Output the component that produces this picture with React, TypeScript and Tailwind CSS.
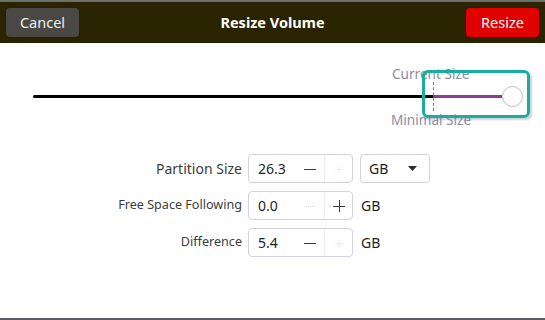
import React from 'react';

const font = { fontFamily: '"Noto Sans", "Open Sans", sans-serif' };

const Minus = ({ faded }: { faded?: boolean }) => (
  <svg width="12" height="12" viewBox="0 0 12 12">
    <line x1="0" y1="6.5" x2="12" y2="6.5" stroke={faded ? '#dcdce8' : '#3a3a3a'} strokeWidth="1" strokeDasharray={faded ? '1 1' : undefined} />
  </svg>
);

const Plus = ({ faded }: { faded?: boolean }) => (
  <svg width="12" height="12" viewBox="0 0 12 12">
    {faded ? (
      <>
        <line x1="2.5" y1="6.5" x2="9.5" y2="6.5" stroke="#dcdce8" strokeWidth="1" strokeDasharray="1 1" />
        <line x1="6" y1="3" x2="6" y2="10" stroke="#dcdce8" strokeWidth="1" strokeDasharray="1 1" />
      </>
    ) : (
      <>
        <line x1="0" y1="6.5" x2="12" y2="6.5" stroke="#3a3a3a" strokeWidth="1" />
        <line x1="6.5" y1="0" x2="6.5" y2="12" stroke="#3a3a3a" strokeWidth="1" />
      </>
    )}
  </svg>
);

interface SpinProps {
  value: string;
  minusOff?: boolean;
  plusOff?: boolean;
}

const SpinBox: React.FC<SpinProps> = ({ value, minusOff, plusOff }) => (
  <div className="flex h-[29px] w-[105px] rounded-[4px] border border-[#d2d2e2] bg-white">
    <div className="flex w-[46px] items-center pl-[9px] text-[14px] text-[#1e1e1e]">{value}</div>
    <div className="flex w-[29px] items-center justify-center">
      <Minus faded={minusOff} />
    </div>
    <div className="flex w-[28px] items-center justify-center border-l border-[#ececf4]">
      <Plus faded={plusOff} />
    </div>
  </div>
);

// 一行表單: 標籤 + 數值框 + 單位
const Row = ({ label, big, children }: { label: string; big?: boolean; children: React.ReactNode }) => (
  <div className="flex h-[29px] items-center">
    <div className={`w-[242px] text-right text-[#3c3c3c] ${big ? 'text-[14px]' : 'text-[12.6px]'}`}>{label}</div>
    <div className="ml-[6px] flex items-center">{children}</div>
  </div>
);

export default function App() {
  return (
    <div className="flex h-[320px] w-[545px] flex-col overflow-hidden bg-white" style={font}>
      {/* 標題列 */}
      <div className="flex h-[43px] items-center justify-between border-t-2 border-[#6e6e6e] bg-[#2a2300] px-[6px]">
        <button className="h-[29px] w-[73px] rounded-[4px] bg-[#4a4844] text-[14.5px] text-[#eeeeee]">Cancel</button>
        <div className="text-[14.5px] font-bold text-white">Resize Volume</div>
        <button className="h-[29px] w-[73px] rounded-[4px] bg-[#e00000] text-[14.5px] text-white">Resize</button>
      </div>

      {/* 滑桿 */}
      <div className="relative h-[111px] pt-[43px]">
        <div className="flex items-center pl-[33px] pr-[22px]">
          <div className="h-[3px] flex-1 rounded-l-full bg-black" />
          <div className="h-[3px] w-[69px] bg-[#8e3c8e]" />
          <div className="h-[21px] w-[21px] rounded-full border border-[#bdbdc8] bg-white" />
        </div>
        <div className="absolute left-[392px] top-[22px] text-[13.6px] leading-[18px] text-[#8c8ca6]">Current Size</div>
        <div className="absolute left-[391px] top-[68px] text-[13.6px] leading-[18px] text-[#8c8ca6]">Minimal Size</div>
        <div className="absolute left-[422px] top-[27px] h-[48px] w-[108px] rounded-[6px] border-[3px] border-[#17ad9f] shadow-[2px_2px_2px_rgba(120,120,140,0.35)]" />
        <div className="absolute left-[433px] top-[39px] h-[29px] border-l border-dashed border-[#777]" />
      </div>

      {/* 表單 */}
      <div className="flex flex-col gap-[8px]">
        <Row label="Partition Size" big>
          <SpinBox value="26.3" plusOff />
          <div className="ml-[7px] flex h-[29px] w-[70px] items-center justify-between rounded-[4px] border border-[#d2d2e2] pl-[8px] pr-[12px] text-[14px] text-[#1e1e1e]">
            <span>GB</span>
            <svg width="9" height="5" viewBox="0 0 9 5">
              <path d="M0 0 L9 0 L4.5 5 Z" fill="#2a2a2a" />
            </svg>
          </div>
        </Row>
        <Row label="Free Space Following">
          <SpinBox value="0.0" minusOff />
          <span className="ml-[8px] text-[14px] text-[#1e1e1e]">GB</span>
        </Row>
        <Row label="Difference">
          <SpinBox value="5.4" plusOff />
          <span className="ml-[8px] text-[14px] text-[#1e1e1e]">GB</span>
        </Row>
      </div>

      <div className="mt-auto h-[2px] bg-[#5c5c68]" />
    </div>
  );
}
